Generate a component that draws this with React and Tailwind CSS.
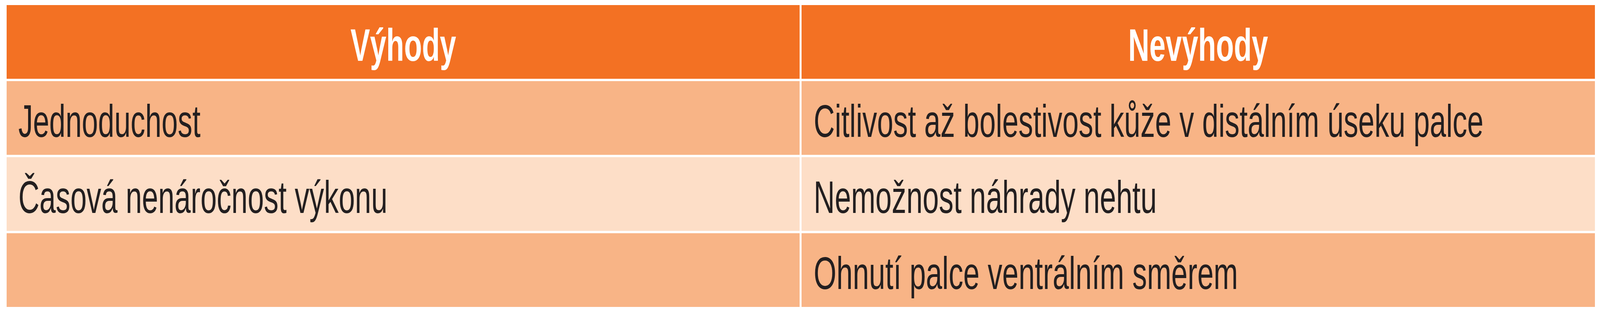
import React from "react";

// The browser window is clamped to 4096px wide, while the reference table is 6127px.

const rows = [
  ["Jednoduchost", "Citlivost až bolestivost kůže v distálním úseku palce"],
  ["Časová nenáročnost výkonu", "Nemožnost náhrady nehtu"],
  ["", "Ohnutí palce ventrálním směrem"],
];

const rowBg = ["bg-[#f8b486]", "bg-[#fddec7]", "bg-[#f8b486]"];

const Cell = ({ bg, children }) => (
  <div className={`h-[189px] overflow-hidden ${bg} pt-[45px] pl-[30.8px] text-[116px] leading-none text-[#231f20] whitespace-nowrap`}>
    <span className="inline-block origin-left scale-x-[0.6455]">{children}</span>
  </div>
);

const HeadCell = ({ children }) => (
  <div className="h-[189px] overflow-hidden bg-[#f37123] pt-[45px] text-center text-[116px] leading-none font-bold text-white whitespace-nowrap">
    <span className="inline-block origin-center scale-x-[0.6455]">{children}</span>
  </div>
);

const App = () => {
  return (
    <div className="w-full h-[800px] overflow-hidden bg-white pt-[13px] pl-[16.7px] pr-[13.4px] font-['Liberation_Sans',Arial,sans-serif]">
      <div className="grid grid-cols-2 gap-x-[4.7px] gap-y-[6px]">
        <HeadCell>Výhody</HeadCell>
        <HeadCell>Nevýhody</HeadCell>

        {rows.map((row, i) => (
          <React.Fragment key={i}>
            <Cell bg={rowBg[i]}>{row[0]}</Cell>
            <Cell bg={rowBg[i]}>{row[1]}</Cell>
          </React.Fragment>
        ))}
      </div>
    </div>
  );
};

export default App;
